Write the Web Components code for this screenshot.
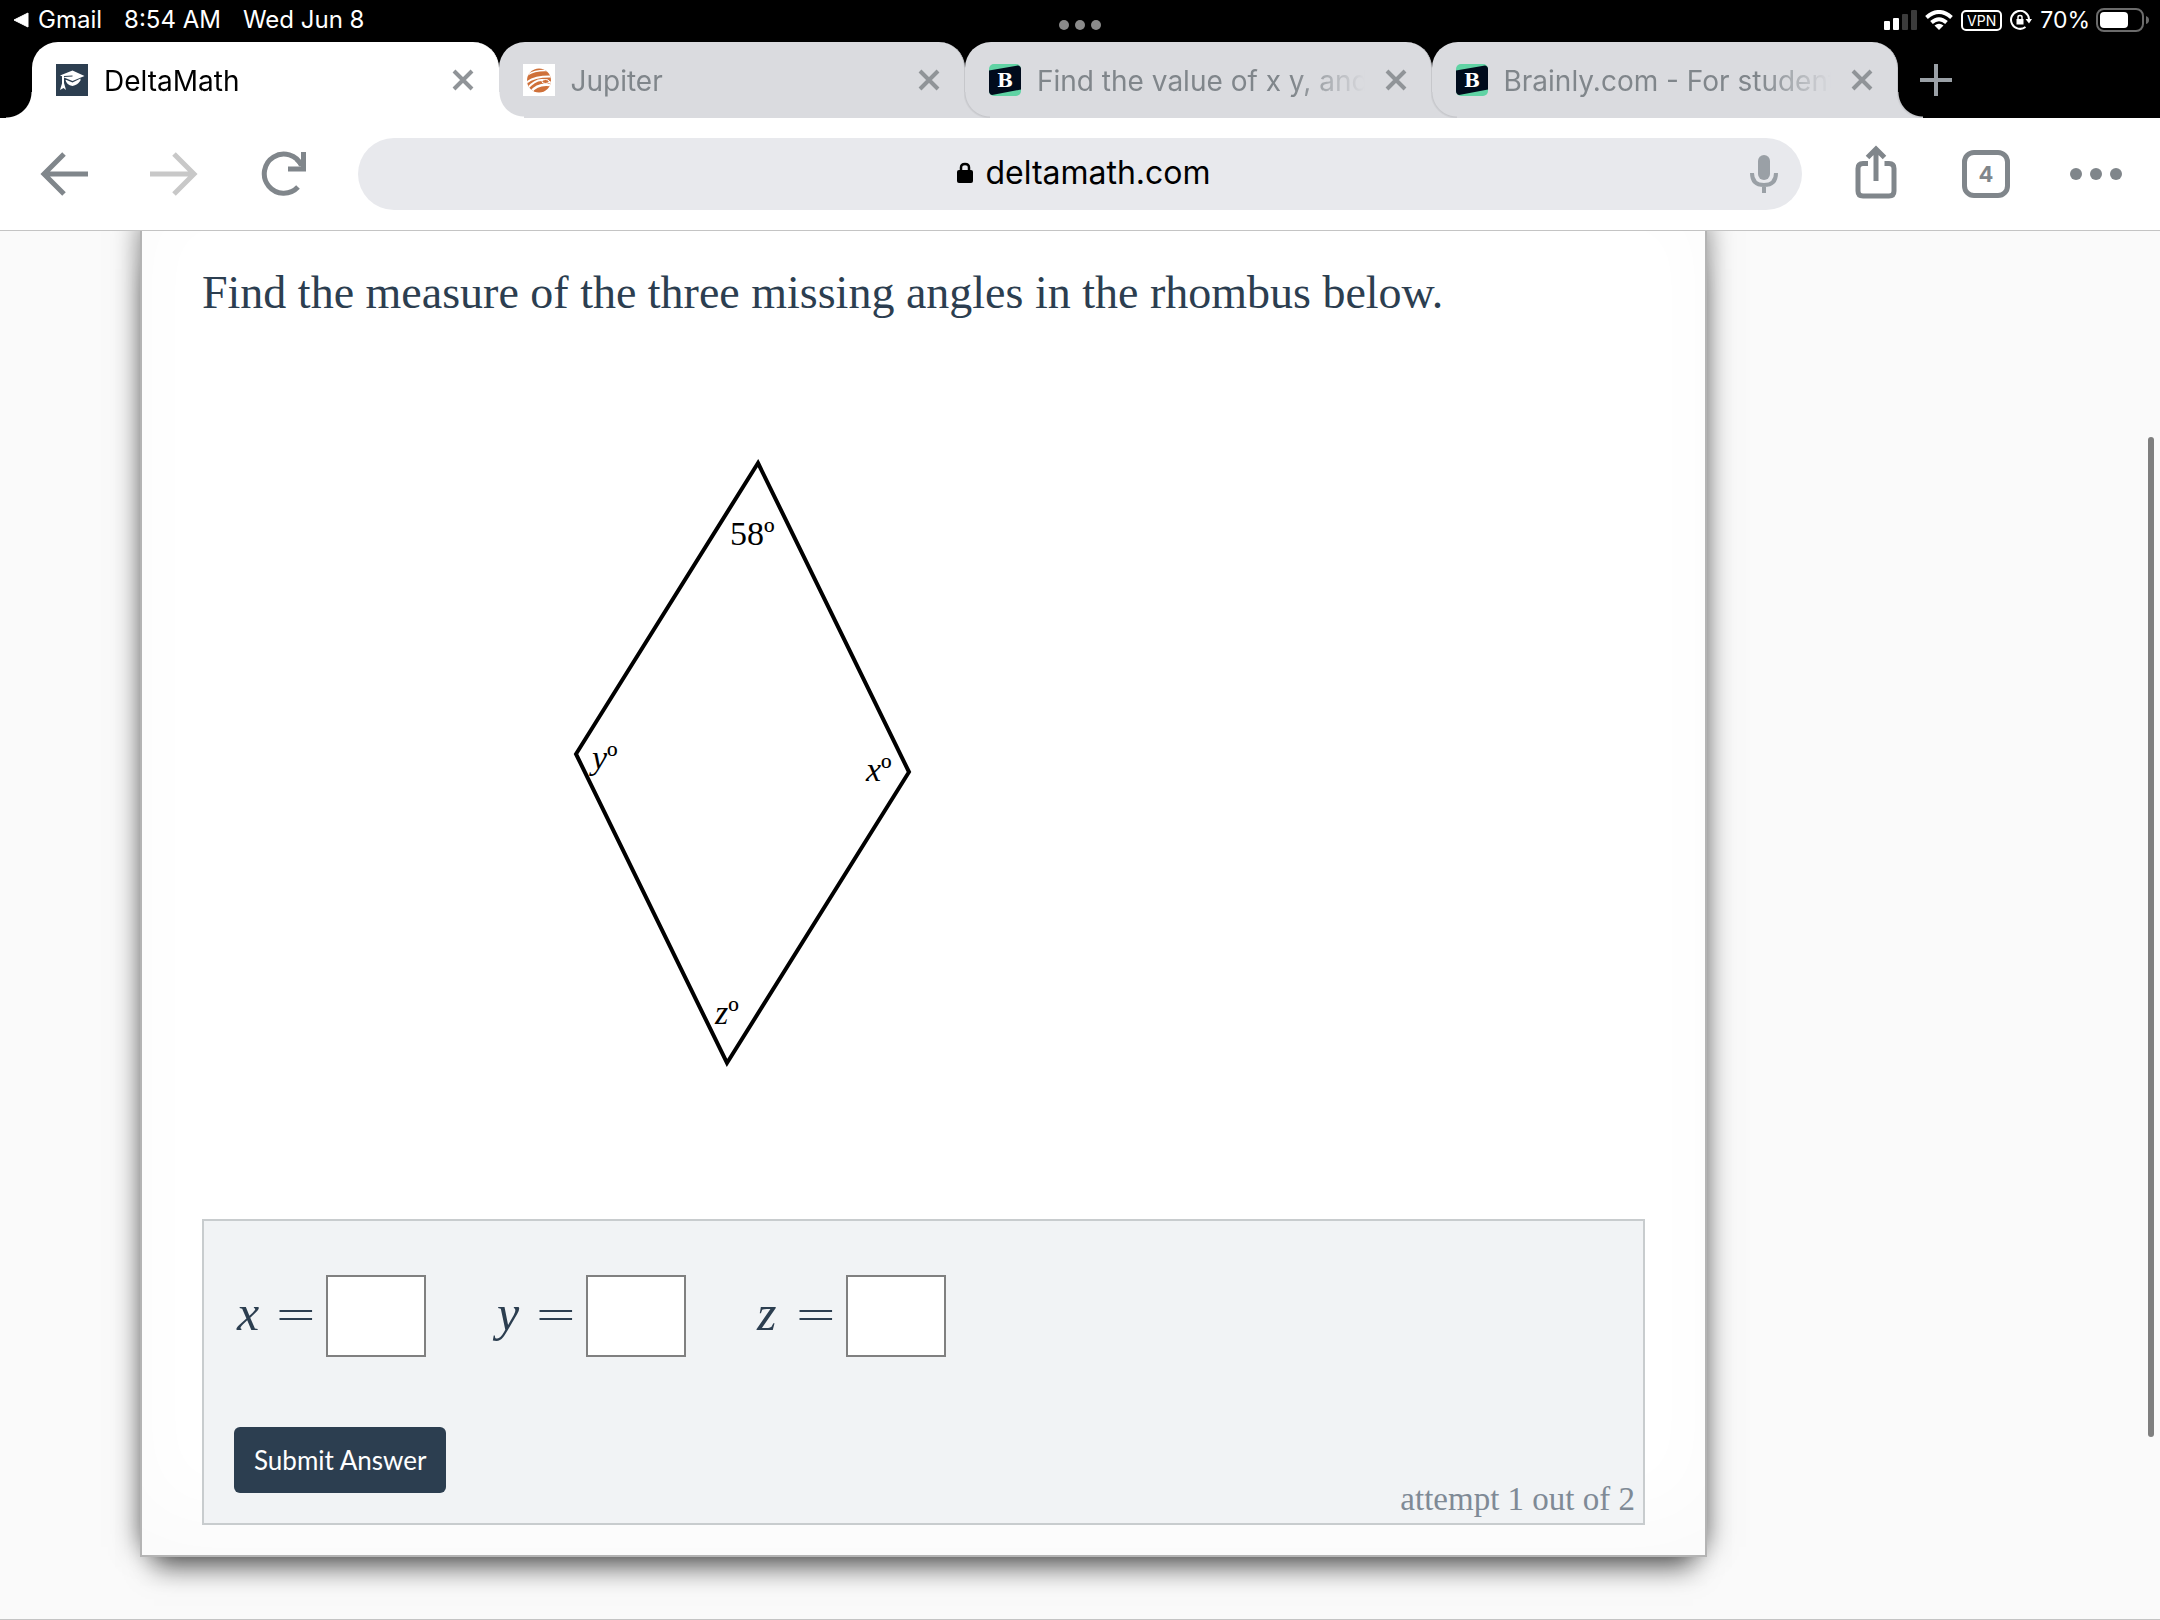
<!DOCTYPE html>
<html lang="en">
<head>
<meta charset="utf-8">
<meta name="viewport" content="width=device-width, initial-scale=1">
<title>DeltaMath</title>
<style>
  html, body {
    height: 100%;
    margin: 0;
  }

  body {
    --ui: Inter, "Liberation Sans", sans-serif;
    --serif: Georgia, "Liberation Serif", serif;
    --navy: #2c3e50;
    --icon: #80868b;
    display: flex;
    flex-direction: column;
    overflow: hidden;
    font-family: var(--ui);
    background: #fafafa;
  }
</style>
</head>
<body>
  <status-bar></status-bar>
  <tab-strip>
    <browser-tab active>
      <svg slot="icon" viewBox="0 0 32 32" width="32" height="32" aria-hidden="true">
        <rect width="32" height="32" fill="#2c3e50"/>
        <path d="M4 11.500 16.500 6.500 28.500 12 16.500 17 8 13.500 8 19 10 26 7.500 24 4 26 6 19.500V12.300z" fill="#fff"/>
        <path d="M9.500 16q1 5 7 6 5-1 8-5.500V14.500l-8 4-6-2.500z" fill="#fff"/>
        <path d="M8 12.500 16.500 12" stroke="#2c3e50"/>
      </svg>
      DeltaMath
    </browser-tab>
    <browser-tab>
      <svg slot="icon" viewBox="0 0 32 32" width="32" height="32" aria-hidden="true">
        <clipPath id="globe"><ellipse cx="16" cy="16.500" rx="12" ry="12"/></clipPath>
        <rect width="32" height="32" fill="#fff"/>
        <g clip-path="url(#globe)">
          <rect x="4" y="4" width="24" height="25" fill="#cf7039"/>
          <g fill="none" stroke="#fff">
            <path d="M4 11Q12 6 24 6.500" stroke-width="1.500"/>
            <path d="M3 19Q11 12 29 12.500" stroke-width="2"/>
            <path d="M4 25Q12 15 20 16T29 21" stroke-width="2"/>
            <path d="M8 28Q14 19 28 21" stroke-width="2.500"/>
          </g>
          <ellipse cx="22.500" cy="17.500" rx="3.500" ry="2" fill="#cf7039" stroke="#fff"/>
        </g>
      </svg>
      Jupiter
    </browser-tab>
    <browser-tab>
      <svg slot="icon" viewBox="0 0 32 32" width="32" height="32" aria-hidden="true">
        <rect width="32" height="32" rx="5" fill="#60d3a4"/>
        <path d="M0 6.500 29 1.500Q32 2 32 5V25.500L3 31Q0 30 0 27z" fill="#000b1c"/>
        <text x="16" y="23" text-anchor="middle" font-family="DejaVu Serif, serif" font-size="19" font-weight="700" fill="#fff">B</text>
      </svg>
      Find the value of x y, and z
    </browser-tab>
    <browser-tab>
      <svg slot="icon" viewBox="0 0 32 32" width="32" height="32" aria-hidden="true">
        <rect width="32" height="32" rx="5" fill="#60d3a4"/>
        <path d="M0 6.500 29 1.500Q32 2 32 5V25.500L3 31Q0 30 0 27z" fill="#000b1c"/>
        <text x="16" y="23" text-anchor="middle" font-family="DejaVu Serif, serif" font-size="19" font-weight="700" fill="#fff">B</text>
      </svg>
      Brainly.com - For students
    </browser-tab>
  </tab-strip>
  <browser-toolbar url="deltamath.com" tabs="4"></browser-toolbar>
  <page-view>
    <problem-card>
      <span slot="question">Find the measure of the three missing angles in the rhombus below.</span>
      <rhombus-figure></rhombus-figure>
      <answer-panel slot="answer">
        <answer-field name="x"></answer-field>
        <answer-field name="y"></answer-field>
        <answer-field name="z"></answer-field>
        <span slot="attempt">attempt 1 out of 2</span>
      </answer-panel>
    </problem-card>
  </page-view>

<script>
const html = (strings) => {
  const template = document.createElement('template')
  template.innerHTML = strings[0]
  return template
}

const statusBar = html`
<style>
  :host {
    display: flex;
    align-items: center;
    justify-content: space-between;
    box-sizing: border-box;
    height: 42px;
    padding: 0 10px 2px;
    background: #000;
    color: #fff;
    font-size: 24px;
    line-height: 28px;
  }

  div {
    flex: 1;
    display: flex;
    align-items: center;
  }

  .left {
    gap: 22px;
  }

  .back {
    display: flex;
    align-items: center;
    gap: 8px;
    color: inherit;
    text-decoration: none;
  }

  .dots {
    flex: none;
    padding-top: 10px;
  }

  .right {
    justify-content: flex-end;
    gap: 8px;
  }

  .vpn {
    box-sizing: border-box;
    height: 21px;
    padding: 0 4px;
    border: 2px solid #fff;
    border-radius: 5px;
    font-size: 14px;
    line-height: 17px;
  }

  .power {
    flex: none;
    gap: 6px;
    font-size: 23px;
  }
</style>

<div class="left">
  <a class="back" href="#">
    <svg width="20" height="16" viewBox="0 0 20 16"><path d="M4 8 18 1V15z" fill="#fff" stroke="#fff" stroke-linejoin="round"/></svg>
    Gmail
  </a>
  <span>8:54 AM</span>
  <span>Wed Jun 8</span>
</div>
<div class="dots">
  <svg width="44" height="12" viewBox="0 0 44 12" fill="#8b8b8b"><circle cx="6" cy="6" r="5"/><circle cx="22" cy="6" r="5"/><circle cx="38" cy="6" r="5"/></svg>
</div>
<div class="right">
  <svg width="33" height="20" viewBox="0 0 33 20">
    <rect y="11" width="6" height="9" rx="1" fill="#fff"/>
    <rect x="9" y="8" width="6" height="12" rx="1" fill="#fff"/>
    <rect x="18" y="4" width="6" height="16" rx="1" fill="#3c3c3c"/>
    <rect x="27" width="6" height="20" rx="1" fill="#3c3c3c"/>
  </svg>
  <svg width="28" height="20" viewBox="0 0 28 20" fill="none" stroke="#fff" stroke-width="4">
    <path d="M1.500 7.500Q14-3.500 26.500 7.500"/>
    <path d="M6.500 12.500Q14 6 21.500 12.500"/>
    <path d="M14 20 9.500 15.500Q14 12 18.500 15.500z" fill="#fff" stroke="none"/>
  </svg>
  <span class="vpn">VPN</span>
  <svg width="22" height="20" viewBox="0 0 22 20" fill="none" stroke="#fff" stroke-width="2">
    <path d="M15.500 17A9 9 0 1 1 19 9"/>
    <path d="M15.500 9H22L19 13.500z" fill="#fff" stroke="none"/>
    <rect x="6.500" y="9" width="7" height="5.500" fill="#fff" stroke="none"/>
    <path d="M8 9V7Q8 5.500 10 5.500T12 7V9" stroke-width="1.500"/>
  </svg>
  <div class="power">
    <span>70%</span>
    <svg width="54" height="24" viewBox="0 0 54 24">
      <rect x="1" y="1" width="46" height="22" rx="7" fill="none" stroke="#6b6b6b" stroke-width="2"/>
      <rect x="4" y="4" width="28" height="16" rx="4" fill="#fff"/>
      <path d="M50 8Q53 9 53 12T50 16z" fill="#6b6b6b"/>
    </svg>
  </div>
</div>
`

class StatusBar extends HTMLElement {
  constructor() {
    super()
    this.attachShadow({ mode: 'open' })
    this.shadowRoot.appendChild(statusBar.content.cloneNode(true))
  }
}

const tabStrip = html`
<style>
  :host {
    display: flex;
    height: 76px;
    padding: 0 202px 0 32px;
    background: #000;
  }

  nav {
    flex: 1;
    display: flex;
    min-width: 0;
  }

  ::slotted(browser-tab) {
    flex: 1;
    min-width: 0;
  }

  button {
    width: 60px;
    padding: 0 0 0 14px;
    border: 0;
    background: none;
  }

  svg {
    display: block;
    margin-left: 8px;
  }
</style>

<nav><slot></slot></nav>
<button aria-label="New tab">
  <svg width="32" height="32" viewBox="0 0 32 32" stroke="#9aa0a6" stroke-width="4"><path d="M0 16H32M16 0V32"/></svg>
</button>
`

class TabStrip extends HTMLElement {
  constructor() {
    super()
    this.attachShadow({ mode: 'open' })
    this.shadowRoot.appendChild(tabStrip.content.cloneNode(true))
  }

  connectedCallback() {
    // Each tab lies over the one that follows it
    const tabs = this.querySelectorAll('browser-tab')
    tabs.forEach((tab, i) => (tab.style.zIndex = tabs.length - i))
  }
}

const browserTab = html`
<style>
  :host {
    --fill: #dadbdf;
    --edge: #c6c7cb;
    position: relative;
    display: flex;
    align-items: center;
    gap: 16px;
    box-sizing: border-box;
    height: 76px;
    padding: 0 24px 0 24px;
    border-right: 1px solid var(--edge);
    border-radius: 26px 26px 0 0;
    background: var(--fill);
    color: var(--icon);
    font-size: 28px;
    line-height: 36px;
  }

  :host([active]) {
    --fill: #fff;
    --edge: #fff;
    color: #000;
  }

  :host::after,
  :host([active])::before {
    content: "";
    position: absolute;
    bottom: 0;
    width: 26px;
    height: 26px;
  }

  :host::after {
    left: 100%;
    background: radial-gradient(circle at 100% 0, transparent 24px, var(--edge) 25px, var(--fill) 27px);
  }

  :host([active])::before {
    right: 100%;
    background: radial-gradient(circle at 0 0, transparent 25px, var(--fill) 26px);
  }

  slot[name="icon"] {
    flex: none;
    display: flex;
  }

  .title {
    flex: 1;
    overflow: hidden;
    white-space: nowrap;
    padding-top: 2px;
    margin-right: 4px;
    mask-image: linear-gradient(to left, transparent, #000 72px);
  }

  button {
    display: flex;
    padding: 0;
    border: 0;
    background: none;
  }
</style>

<slot name="icon"></slot>
<span class="title"><slot></slot></span>
<button aria-label="Close tab">
  <svg width="22" height="22" viewBox="0 0 22 22" stroke="#909498" stroke-width="4"><path d="M2 2 20 20M20 2 2 20"/></svg>
</button>
`

class BrowserTab extends HTMLElement {
  constructor() {
    super()
    this.attachShadow({ mode: 'open' })
    this.shadowRoot.appendChild(browserTab.content.cloneNode(true))
  }
}

const browserToolbar = html`
<style>
  :host {
    position: relative;
    display: flex;
    align-items: center;
    box-sizing: border-box;
    height: 113px;
    padding: 0 40px;
    border-bottom: 1px solid #c4c4c4;
    background: #fff;
  }

  .nav, .actions {
    display: flex;
    align-items: center;
    gap: 62px;
  }

  button {
    display: flex;
    align-items: center;
    justify-content: center;
    flex: none;
    box-sizing: border-box;
    width: 48px;
    height: 56px;
    padding: 0;
    border: 0;
    background: none;
    color: var(--icon);
  }

  svg {
    flex: none;
  }

  .omnibox {
    flex: 1;
    display: flex;
    align-items: center;
    box-sizing: border-box;
    height: 72px;
    margin: 0 50px;
    padding: 0 14px 0 70px;
    border-radius: 36px;
    background: #e8e9ed;
  }

  .url {
    flex: 1;
    display: flex;
    align-items: center;
    justify-content: center;
    gap: 12px;
    padding-bottom: 2px;
  }

  input {
    field-sizing: content;
    padding: 0;
    border: 0;
    background: none;
    color: #000;
    font: 32px/40px var(--ui);
  }

  .count {
    height: 48px;
    border: 5px solid var(--icon);
    border-radius: 12px;
    font: 700 22px/28px var(--ui);
  }

  .share {
    padding-bottom: 4px;
  }
</style>

<div class="nav">
  <button aria-label="Back">
    <svg width="48" height="44" viewBox="0 0 48 44" fill="none" stroke="currentColor" stroke-width="5"><path d="M48 22H4M24 2 4 22 24 42"/></svg>
  </button>
  <button aria-label="Forward" disabled>
    <svg width="48" height="44" viewBox="0 0 48 44" fill="none" stroke="#c8c8c8" stroke-width="5"><path d="M0 22H44M24 2 44 22 24 42"/></svg>
  </button>
  <button aria-label="Reload">
    <svg width="46" height="46" viewBox="0 0 46 46" fill="none" stroke="currentColor" stroke-width="5">
      <path d="M37 36A19.500 19.500 0 1 1 40.500 14.500"/><path d="M42.500 1V18H27"/><path d="M34 10 43 19V10z" fill="currentColor" stroke="none"/>
    </svg>
  </button>
</div>
<div class="omnibox">
  <div class="url">
    <svg width="16" height="22" viewBox="0 0 16 22"><rect y="8" width="16" height="13" rx="2"/><path d="M4 9V5.500Q4 2 8 2T12 5.500V9" fill="none" stroke="#000" stroke-width="2.500"/></svg>
    <input type="text" aria-label="Address">
  </div>
  <button aria-label="Voice search">
    <svg width="28" height="40" viewBox="0 0 28 40" fill="none" stroke="#9aa0a6" stroke-width="4">
      <rect x="8" y="1" width="12" height="25" rx="6" fill="#9aa0a6" stroke="none"/>
      <path d="M2 19Q2 31 14 31T26 19M14 31V39"/>
    </svg>
  </button>
</div>
<div class="actions">
  <button class="share" aria-label="Share">
    <svg width="42" height="54" viewBox="0 0 42 54" fill="none" stroke="currentColor" stroke-width="5">
      <path d="M13 18.500H8Q3 18.500 3 23.500V46Q3 51 8 51H34Q39 51 39 46V23.500Q39 18.500 34 18.500H29.500"/>
      <path d="M21 36V5M12.500 12.500 21 4 29.500 12.500"/>
    </svg>
  </button>
  <button class="count" aria-label="Show tabs"></button>
  <button aria-label="Menu">
    <svg width="52" height="12" viewBox="0 0 52 12" fill="currentColor"><circle cx="6" cy="6" r="6"/><circle cx="26" cy="6" r="6"/><circle cx="46" cy="6" r="6"/></svg>
  </button>
</div>
`

class BrowserToolbar extends HTMLElement {
  constructor() {
    super()
    this.attachShadow({ mode: 'open' })
    this.shadowRoot.appendChild(browserToolbar.content.cloneNode(true))
  }

  connectedCallback() {
    this.shadowRoot.querySelector('input').value = this.getAttribute('url')
    this.shadowRoot.querySelector('.count').textContent = this.getAttribute('tabs')
  }
}

const pageView = html`
<style>
  :host {
    position: relative;
    flex: 1;
    display: block;
    box-sizing: border-box;
    min-height: 0;
    overflow: hidden;
    padding: 0 453px 0 140px;
    border-bottom: 1px solid #c4c4c4;
    background: #fafafa;
  }

  /* Overlay scroll thumb */
  .thumb {
    position: absolute;
    top: 206px;
    bottom: 182px;
    right: 6px;
    width: 6px;
    border-radius: 3px;
    background: #7f7f7f;
  }
</style>

<slot></slot>
<div class="thumb"></div>
`

class PageView extends HTMLElement {
  constructor() {
    super()
    this.attachShadow({ mode: 'open' })
    this.shadowRoot.appendChild(pageView.content.cloneNode(true))
  }
}

const problemCard = html`
<style>
  :host {
    display: block;
    padding: 32px 60px 30px;
    border: 2px solid #b4b4b4;
    border-top: 0;
    background: #fff;
    box-shadow:
      0 -10px 26px rgba(0, 0, 0, 0.5),
      0 24px 26px -14px rgba(0, 0, 0, 0.6),
      inset 0 -40px 80px rgba(0, 0, 0, 0.02);
  }

  h1 {
    margin: 0;
    color: var(--navy);
    font: 400 46px/60px var(--serif);
  }
</style>

<h1><slot name="question"></slot></h1>
<slot></slot>
<slot name="answer"></slot>
`

class ProblemCard extends HTMLElement {
  constructor() {
    super()
    this.attachShadow({ mode: 'open' })
    this.shadowRoot.appendChild(problemCard.content.cloneNode(true))
  }
}

const rhombusFigure = html`
<style>
  :host {
    display: block;
    padding: 118px 0 132px 350px;
  }

  svg {
    display: block;
    overflow: visible;
    font: 34px var(--serif);
  }

  .var {
    font-style: italic;
  }
</style>

<svg width="380" height="646" viewBox="552 441 380 646" role="img" aria-label="Rhombus">
  <path d="M758 463 909 772 727 1063 576 754z" fill="none" stroke="#000" stroke-width="4"/>
  <text x="730" y="545">58º</text>
  <text x="592" y="769"><tspan class="var">y</tspan>º</text>
  <text x="866" y="781"><tspan class="var">x</tspan>º</text>
  <text x="715" y="1024"><tspan class="var">z</tspan>º</text>
</svg>
`

class RhombusFigure extends HTMLElement {
  constructor() {
    super()
    this.attachShadow({ mode: 'open' })
    this.shadowRoot.appendChild(rhombusFigure.content.cloneNode(true))
  }
}

const answerPanel = html`
<style>
  :host {
    display: block;
    padding: 54px 8px 0 30px;
    border: 2px solid #c8ccce;
    background: #f1f3f5;
  }

  .fields {
    display: flex;
    gap: 68px;
    margin-bottom: 70px;
  }

  .footer {
    display: flex;
    align-items: flex-end;
    justify-content: space-between;
  }

  button {
    height: 66px;
    padding: 0 20px;
    margin: 0 0 30px;
    border: 0;
    border-radius: 6px;
    background: var(--navy);
    color: #fff;
    font: 26px/32px Lato, sans-serif;
  }

  p {
    margin: 0 0 4px;
    color: #7f8a96;
    font: 33px/40px var(--serif);
  }
</style>

<form>
  <div class="fields"><slot></slot></div>
  <div class="footer">
    <button type="submit">Submit Answer</button>
    <p><slot name="attempt"></slot></p>
  </div>
</form>
`

class AnswerPanel extends HTMLElement {
  constructor() {
    super()
    this.attachShadow({ mode: 'open' })
    this.shadowRoot.appendChild(answerPanel.content.cloneNode(true))
    this.shadowRoot.querySelector('form').addEventListener('submit', (e) => e.preventDefault())
  }
}

const answerField = html`
<style>
  :host {
    display: flex;
  }

  label {
    display: flex;
    align-items: center;
    box-sizing: border-box;
    width: 92px;
    padding: 0 0 6px 3px;
    color: var(--navy);
    font: 50px/60px var(--serif);
  }

  .name {
    width: 37px;
    font-style: italic;
  }

  .eq {
    font-family: "DejaVu Sans", sans-serif;
    font-size: 52px;
    font-weight: 200;
  }

  input {
    box-sizing: border-box;
    width: 100px;
    height: 82px;
    padding: 0 8px;
    border: 2px solid #808080;
    border-radius: 0;
    background: #fff;
    font: 36px/40px var(--serif);
  }
</style>

<label for="value"><span class="name"></span><span class="eq">=</span></label>
<input type="text" id="value">
`

class AnswerField extends HTMLElement {
  constructor() {
    super()
    this.attachShadow({ mode: 'open' })
    this.shadowRoot.appendChild(answerField.content.cloneNode(true))
  }

  connectedCallback() {
    this.shadowRoot.querySelector('.name').textContent = this.getAttribute('name')
  }
}

customElements.define('status-bar', StatusBar)
customElements.define('tab-strip', TabStrip)
customElements.define('browser-tab', BrowserTab)
customElements.define('browser-toolbar', BrowserToolbar)
customElements.define('page-view', PageView)
customElements.define('problem-card', ProblemCard)
customElements.define('rhombus-figure', RhombusFigure)
customElements.define('answer-panel', AnswerPanel)
customElements.define('answer-field', AnswerField)
</script>
</body>
</html>
